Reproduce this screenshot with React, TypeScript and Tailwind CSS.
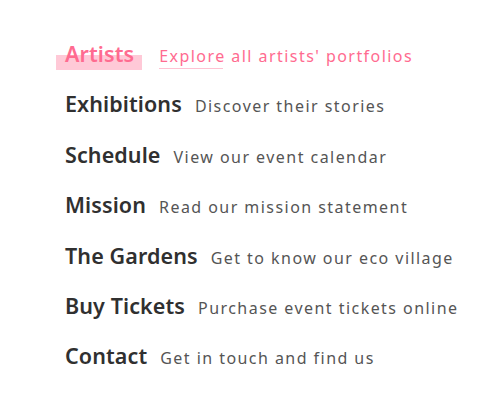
import React from "react";

const items = [
  { title: "Artists", text: "Explore all artists' portfolios", active: true },
  { title: "Exhibitions", text: "Discover their stories" },
  { title: "Schedule", text: "View our event calendar" },
  { title: "Mission", text: "Read our mission statement" },
  { title: "The Gardens", text: "Get to know our eco village" },
  { title: "Buy Tickets", text: "Purchase event tickets online" },
  { title: "Contact", text: "Get in touch and find us" },
];

export default function App() {
  return (
    <div
      className="w-[502px] h-[411px] bg-white pl-[65px] pt-[38px]"
      style={{ fontFamily: "'Noto Sans', 'Open Sans', sans-serif" }}
    >
      <ul className="flex flex-col gap-[22px]">
        {items.map((it) =>
          it.active ? (
            <li key={it.title} className="flex items-baseline h-[28.4px]">
              <span className="relative text-[21.5px] font-semibold text-[#ff6b90] tracking-[0.1px]">
                <span className="absolute left-[-9px] right-[-8px] top-[17px] h-[15px] bg-[#ffc9d7]" />
                <span className="relative">{it.title}</span>
              </span>
              <span className="relative ml-[25px] text-[16px] tracking-[1.45px] text-[#ff6b90]">
                {it.text}
                <span className="absolute left-0 top-[24px] w-[64px] h-px bg-[#ffc2d2]" />
              </span>
            </li>
          ) : (
            <li key={it.title} className="flex items-baseline h-[28.4px]">
              <span className="text-[21.5px] font-semibold text-[#303030] tracking-[0.1px]">
                {it.title}
              </span>
              <span className="ml-[13px] text-[16px] tracking-[1.45px] text-[#555555]">
                {it.text}
              </span>
            </li>
          )
        )}
      </ul>
    </div>
  );
}
